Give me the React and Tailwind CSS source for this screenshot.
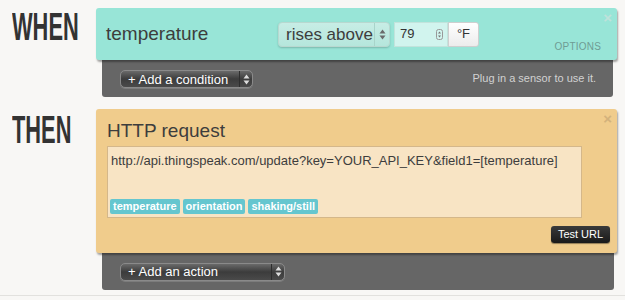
import { useState } from 'react';

const SelectArrows = ({ className }) => (
  <svg width="7" height="11" viewBox="0 0 7 11" className={className}>
    <path d="M3.5 0.5 L6.5 4.5 H0.5 Z" fill="currentColor" />
    <path d="M3.5 10.5 L6.5 6.5 H0.5 Z" fill="currentColor" />
  </svg>
);

const DarkSelect = ({ label, width }) => (
  <div
    className={`flex items-center h-[18px] ${width} rounded-[5px] border border-[#8a8a8a] bg-gradient-to-b from-[#6a6a6a] via-[#3c3c3c] to-[#4a4a4a] shadow-[0_1px_0_rgba(255,255,255,0.15)]`}
  >
    <span className="flex-1 pl-[7px] text-[13px] leading-none text-white">{label}</span>
    <span className="flex items-center justify-center w-[13px] h-full border-l border-[#2e2e2e] text-[#dddddd]">
      <SelectArrows />
    </span>
  </div>
);

const App = () => {
  const [value] = useState('79');

  return (
    <div className="w-[625px] h-[300px] bg-[#f8f7f5] overflow-hidden font-['Liberation_Sans',Arial,sans-serif]">
      <div className="h-[296px] pt-[8px] border-b border-[#e2e1de]">
        {/* WHEN */}
        <div className="flex">
          <div className="w-[96px] pl-[12px] pt-[0px]">
            <div className="origin-left scale-x-[0.56] text-[39px] leading-[38px] font-bold text-[#333333]">
              WHEN
            </div>
          </div>
          <div className="w-[521px]">
            <div className="relative z-10 h-[52px] rounded-[3px] bg-[#98e5d7] shadow-[1px_2px_2px_rgba(0,0,0,0.35)] flex items-center pl-[10px]">
              <span className="text-[19px] text-[#3d3d3d] w-[172px]">temperature</span>
              <div className="flex items-center h-[25px] w-[112px] rounded-[4px] border border-[#b8d8d0] bg-gradient-to-b from-[#c7ede5] to-[#b5e6dc] shadow-[0_1px_2px_rgba(0,0,0,0.2)]">
                <span className="flex-1 pl-[7px] text-[17px] text-[#3d3d3d] leading-none">rises above</span>
                <span className="flex items-center justify-center w-[15px] h-full border-l border-[#a8d4ca] text-[#6a6a6a]">
                  <SelectArrows />
                </span>
              </div>
              <div className="ml-[4px] flex items-center h-[25px] w-[54px] border border-[#c2e3dc] bg-[#d1f4ee] pl-[5px] pr-[4px]">
                <span className="flex-1 text-[13px] text-[#333]">{value}</span>
                <svg width="7" height="11" viewBox="0 0 7 11">
                  <rect x="0.5" y="0.5" width="6" height="10" rx="2" fill="none" stroke="#999" />
                  <path d="M3.5 2.5 L5 4.5 H2 Z M3.5 8.5 L5 6.5 H2 Z" fill="#777" />
                </svg>
              </div>
              <div className="flex items-center justify-center h-[25px] w-[31px] rounded-r-[3px] border border-[#cfcfcf] bg-gradient-to-b from-[#ffffff] to-[#ececec] text-[13px] text-[#333]">
                °F
              </div>
              <span className="absolute right-[5px] top-[2px] text-[15px] font-bold text-[#bfe2db] leading-none">×</span>
              <span className="absolute right-[16px] top-[31px] text-[10px] tracking-[0.2px] text-[#6f9c94]">OPTIONS</span>
            </div>
            <div className="ml-[6px] w-[511px] h-[37px] rounded-b-[3px] bg-[#666666] flex items-center justify-between pl-[18px] pr-[17px] pt-[1px]">
              <DarkSelect label="+ Add a condition" width="w-[133px]" />
              <span className="text-[11px] text-[#d2d2d2] -mt-[2px]">Plug in a sensor to use it.</span>
            </div>
          </div>
        </div>

        {/* THEN */}
        <div className="flex mt-[12px]">
          <div className="w-[96px] pl-[12px] pt-[2px]">
            <div className="origin-left scale-x-[0.56] text-[39px] leading-[38px] font-bold text-[#333333]">
              THEN
            </div>
          </div>
          <div className="w-[521px]">
            <div className="relative z-10 h-[144px] rounded-[3px] bg-[#f0cc8c] shadow-[1px_2px_2px_rgba(0,0,0,0.35)] pl-[11px] pr-[35px] pt-[10px]">
              <div className="text-[19px] leading-[24px] text-[#3d3d3d]">HTTP request</div>
              <div className="mt-[3px] h-[72px] border border-[#d4b78a] bg-[#f8e4c4] flex flex-col justify-between px-[2px] pt-[4px] pb-[3px]">
                <div className="px-[1px] text-[13px] text-[#3d3d3d]">
                  http://api.thingspeak.com/update?key=YOUR_API_KEY&amp;field1=[temperature]
                </div>
                <div className="flex gap-[3px]">
                  {['temperature', 'orientation', 'shaking/still'].map((t) => (
                    <span key={t} className="h-[15px] px-[3px] rounded-[2px] bg-[#65c6cf] text-[11px] leading-[15px] font-bold text-white">
                      {t}
                    </span>
                  ))}
                </div>
              </div>
              <span className="absolute right-[5px] top-[2px] text-[15px] font-bold text-[#d3b27c] leading-none">×</span>
              <div className="absolute right-[7px] bottom-[10px] h-[17px] w-[59px] rounded-[3px] bg-gradient-to-b from-[#3a3a3a] to-[#1a1a1a] shadow-[0_1px_1px_rgba(0,0,0,0.4)] flex items-center justify-center text-[11px] text-white">
                Test URL
              </div>
            </div>
            <div className="ml-[6px] w-[512px] h-[37px] rounded-b-[3px] bg-[#666666] flex items-center pl-[18px]">
              <DarkSelect label="+ Add an action" width="w-[165px]" />
            </div>
          </div>
        </div>
      </div>
    </div>
  );
};

export default App;
